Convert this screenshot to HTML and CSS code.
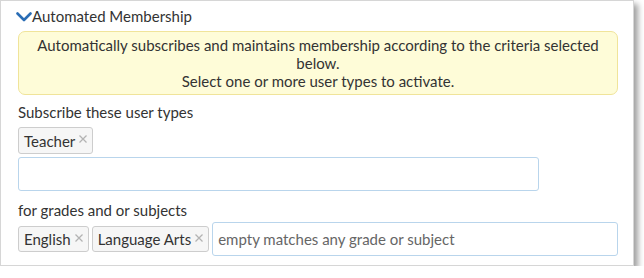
FILE: index.html
```html
<!DOCTYPE html>
<html>
  <head>
    <meta charset="UTF-8" />
    <title>Automated Membership</title>
    <link rel="stylesheet" href="styles.css">
  </head>
  <body>
    <div class="panel">
      <div class="panel-title">
        <svg class="chevron" width="16" height="10" viewBox="0 0 16 10">
          <path d="M1.5 1.5 L8 8 L14.5 1.5" fill="none" stroke="#2a6db5" stroke-width="2.6" stroke-linecap="round" stroke-linejoin="round" />
        </svg>
        <span>Automated Membership</span>
      </div>

      <div class="notice">
        Automatically subscribes and maintains membership according to the criteria selected below.<br>
        Select one or more user types to activate.
      </div>

      <div class="field-label">Subscribe these user types</div>
      <div class="tag-list">
        <span class="tag">Teacher<svg class="tag-remove" width="8" height="8" viewBox="0 0 8 8"><path d="M0.5 0.5 L7.5 7.5 M7.5 0.5 L0.5 7.5" stroke="#b3b3b3" stroke-width="1.3" /></svg></span>
      </div>
      <input class="text-input user-input" type="text" />

      <div class="field-label grades-label">for grades and or subjects</div>
      <div class="tag-row">
        <span class="tag">English<svg class="tag-remove" width="8" height="8" viewBox="0 0 8 8"><path d="M0.5 0.5 L7.5 7.5 M7.5 0.5 L0.5 7.5" stroke="#b3b3b3" stroke-width="1.3" /></svg></span>
        <span class="tag">Language Arts<svg class="tag-remove" width="8" height="8" viewBox="0 0 8 8"><path d="M0.5 0.5 L7.5 7.5 M7.5 0.5 L0.5 7.5" stroke="#b3b3b3" stroke-width="1.3" /></svg></span>
        <input class="text-input grade-input" type="text" placeholder="empty matches any grade or subject" />
      </div>
    </div>
  </body>
</html>
```

FILE: styles.css
```css
body {
  margin: 0;
  background: #fff;
  font-family: Lato, "Open Sans", sans-serif;
  color: #333;
}
.panel {
  width: 634px;
  height: 266px;
  box-sizing: border-box;
  border: 1px solid #d6d6d6;
  background: #fff;
  box-shadow: 4px 4px 6px rgba(0, 0, 0, 0.38);
  padding: 5px 15px 0 17px;
}
.panel-title {
  display: flex;
  align-items: center;
  height: 20px;
  margin-left: -2px;
  font-size: 15px;
}
.chevron {
  margin-top: 1px;
}
.notice {
  margin-top: 5px;
  background: #fefcd8;
  border: 1px solid #f0e49a;
  border-radius: 7px;
  padding: 4px 10px;
  font-size: 15px;
  line-height: 18px;
  text-align: center;
}
.field-label {
  margin-top: 7px;
  font-size: 15px;
  line-height: 20px;
}
.grades-label {
  margin-top: 9px;
}
.tag-list {
  display: flex;
  margin-top: 5px;
}
.tag {
  display: inline-flex;
  align-items: center;
  height: 27px;
  box-sizing: border-box;
  padding: 0 5px;
  border: 1px solid #cdcdcd;
  border-radius: 3px;
  background: #f6f6f6;
  font-size: 15px;
  color: #333;
}
.tag-remove {
  margin-left: 4px;
  margin-top: -3px;
}
.text-input {
  box-sizing: border-box;
  height: 34px;
  border: 1px solid #b9d5ec;
  border-radius: 3px;
  padding: 0 5px;
  font-family: Lato, "Open Sans", sans-serif;
  font-size: 15px;
  color: #333;
  outline: none;
}
.text-input::placeholder {
  color: #666;
}
.user-input {
  display: block;
  width: 521px;
  margin-top: 3px;
}
.tag-row {
  display: flex;
  align-items: center;
  gap: 3px;
  margin-top: 2px;
}
.tag-row .tag {
  height: 26px;
}
.grade-input {
  flex: 1;
}
```
